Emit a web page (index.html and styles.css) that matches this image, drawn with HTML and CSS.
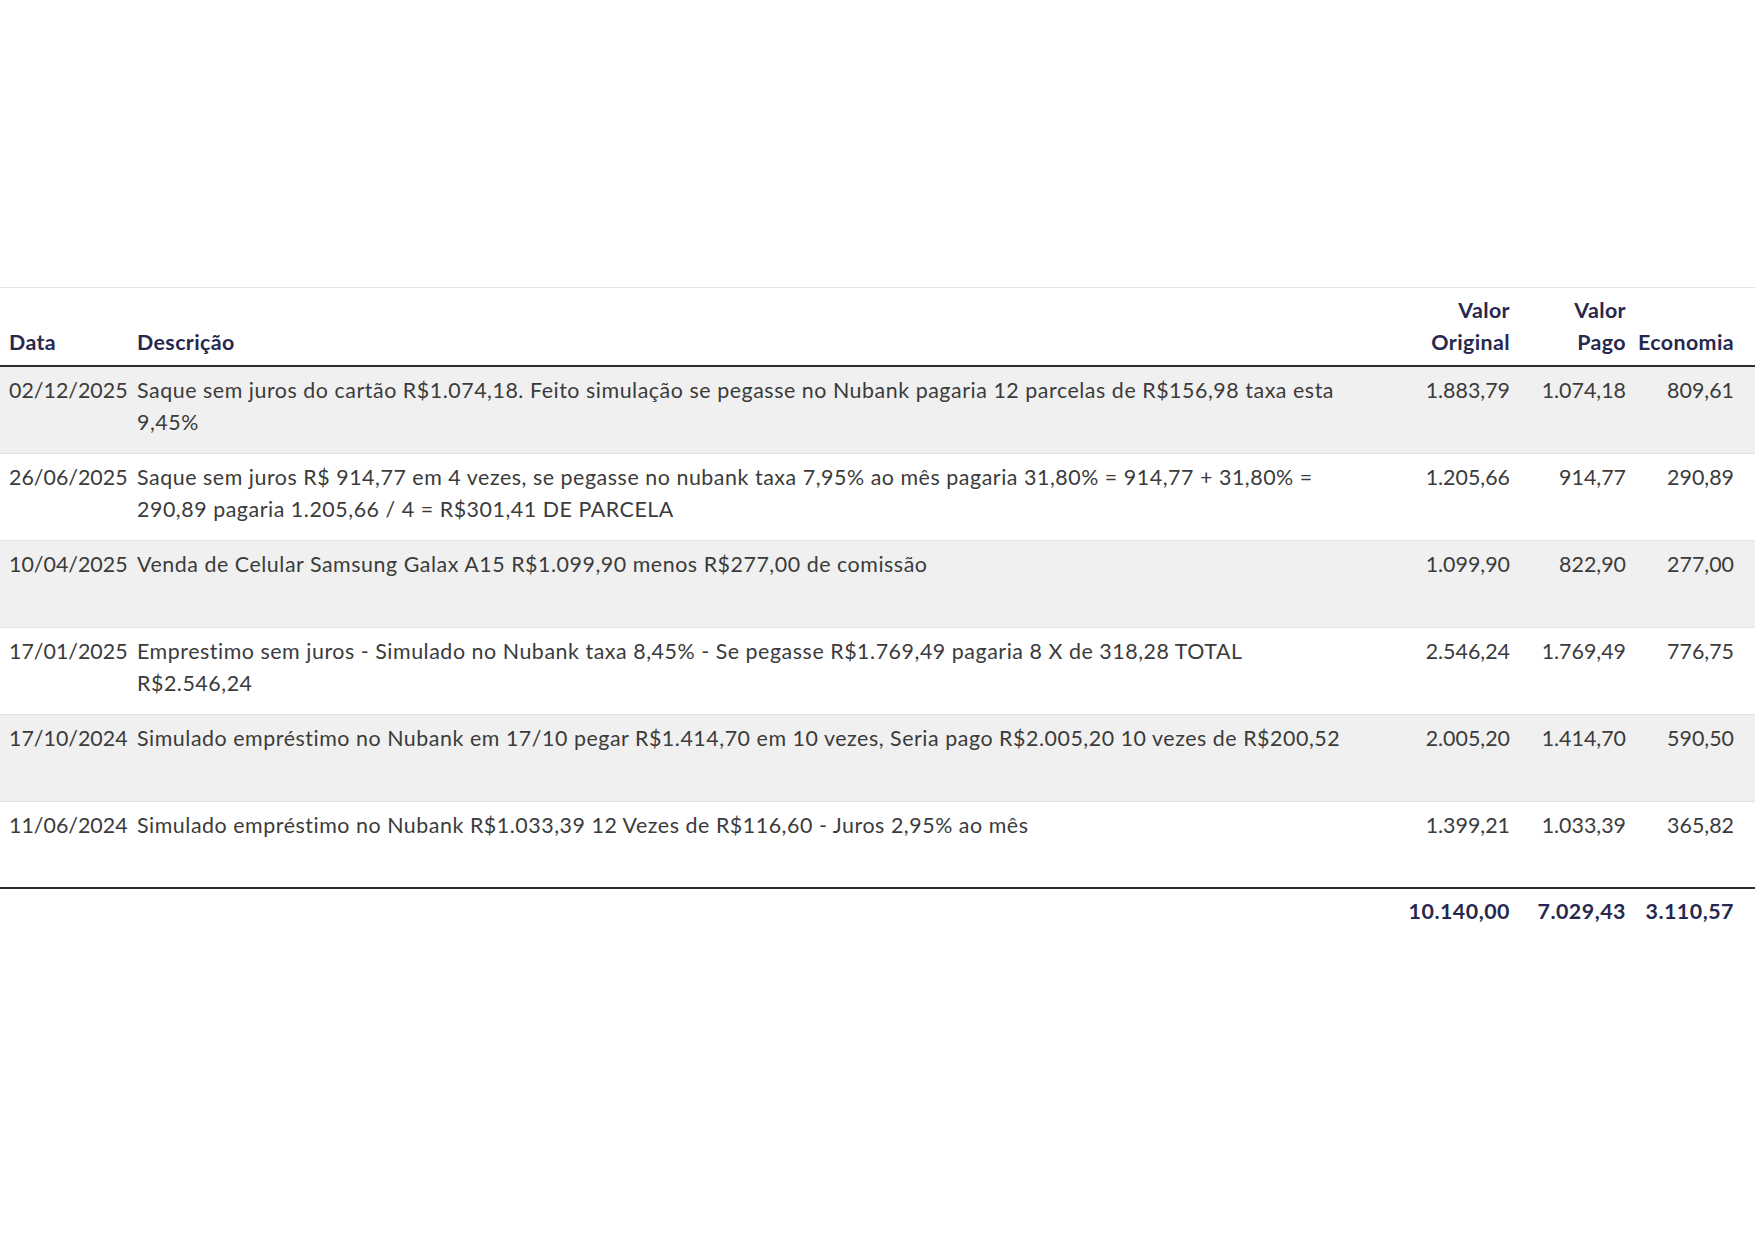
FILE: index.html
```html
<!DOCTYPE html>
<html lang="pt-BR">
<head>
<meta charset="utf-8">
<title>Economia</title>
<link rel="stylesheet" href="styles.css">
</head>
<body>
<main class="page">
  <table class="ledger">
    <colgroup>
      <col class="c-date">
      <col class="c-desc">
      <col class="c-orig">
      <col class="c-pago">
      <col class="c-eco">
    </colgroup>
    <thead>
      <tr>
        <th class="date">Data</th>
        <th class="desc">Descrição</th>
        <th class="num orig">Valor Original</th>
        <th class="num pago">Valor Pago</th>
        <th class="num last">Economia</th>
      </tr>
    </thead>
    <tbody>
      <tr class="odd">
        <td class="date">02/12/2025</td>
        <td class="desc">Saque sem juros do cartão R$1.074,18. Feito simulação se pegasse no Nubank pagaria 12 parcelas de R$156,98 taxa esta 9,45%</td>
        <td class="num orig">1.883,79</td>
        <td class="num pago">1.074,18</td>
        <td class="num last">809,61</td>
      </tr>
      <tr>
        <td class="date">26/06/2025</td>
        <td class="desc">Saque sem juros R$ 914,77 em 4 vezes, se pegasse no nubank taxa 7,95% ao mês pagaria 31,80% = 914,77 + 31,80% = 290,89 pagaria 1.205,66 / 4 = R$301,41 DE PARCELA</td>
        <td class="num orig">1.205,66</td>
        <td class="num pago">914,77</td>
        <td class="num last">290,89</td>
      </tr>
      <tr class="odd">
        <td class="date">10/04/2025</td>
        <td class="desc">Venda de Celular Samsung Galax A15 R$1.099,90 menos R$277,00 de comissão</td>
        <td class="num orig">1.099,90</td>
        <td class="num pago">822,90</td>
        <td class="num last">277,00</td>
      </tr>
      <tr>
        <td class="date">17/01/2025</td>
        <td class="desc">Emprestimo sem juros - Simulado no Nubank taxa 8,45% - Se pegasse R$1.769,49 pagaria 8 X de 318,28 TOTAL R$2.546,24</td>
        <td class="num orig">2.546,24</td>
        <td class="num pago">1.769,49</td>
        <td class="num last">776,75</td>
      </tr>
      <tr class="odd">
        <td class="date">17/10/2024</td>
        <td class="desc">Simulado empréstimo no Nubank em 17/10 pegar R$1.414,70 em 10 vezes, Seria pago R$2.005,20 10 vezes de R$200,52</td>
        <td class="num orig">2.005,20</td>
        <td class="num pago">1.414,70</td>
        <td class="num last">590,50</td>
      </tr>
      <tr>
        <td class="date">11/06/2024</td>
        <td class="desc">Simulado empréstimo no Nubank R$1.033,39 12 Vezes de R$116,60 - Juros 2,95% ao mês</td>
        <td class="num orig">1.399,21</td>
        <td class="num pago">1.033,39</td>
        <td class="num last">365,82</td>
      </tr>
    </tbody>
    <tfoot>
      <tr>
        <td class="date"></td>
        <td class="desc"></td>
        <td class="num orig">10.140,00</td>
        <td class="num pago">7.029,43</td>
        <td class="num last">3.110,57</td>
      </tr>
    </tfoot>
  </table>
</main>
</body>
</html>
```

FILE: styles.css
```css
html, body {
  margin: 0;
  padding: 0;
  background: #ffffff;
}

body {
  font-family: "Lato", "Noto Sans", sans-serif;
  font-size: 21.4px;
  color: #3b3b3b;
}

.page {
  padding-top: 287px;
}

.ledger {
  width: 1755px;
  border-collapse: collapse;
  table-layout: fixed;
  border-top: 1px solid #e4e4e4;
}

.c-date { width: 132px; }
.c-desc { width: 1223px; }
.c-orig { width: 160px; }
.c-pago { width: 116px; }
.c-eco  { width: 124px; }

.ledger th,
.ledger td {
  padding: 0 5px;
  line-height: 32px;
}

.ledger .date { padding-left: 9px; }
.ledger .num { text-align: right; }
.ledger .orig { padding-left: 35px; }
.ledger .pago { padding-left: 22px; }
.ledger .last { padding-right: 21px; padding-left: 6px; }

.ledger thead th {
  color: #28284f;
  font-weight: 700;
  text-align: left;
  vertical-align: bottom;
  padding-top: 6px;
  padding-bottom: 7px;
  border-bottom: 2px solid #2e2e2e;
  letter-spacing: 0.4px;
}

.ledger thead th.num { text-align: right; }

.ledger tbody td {
  vertical-align: top;
  height: 87px;
  box-sizing: border-box;
  padding-top: 7px;
  padding-bottom: 0;
  border-bottom: 1px solid #e2e2e2;
}

.ledger tbody td.desc { letter-spacing: 0.54px; }

.ledger tbody tr.odd td { background: #f0f0f0; }

.ledger tbody tr:last-child td { border-bottom: 2px solid #2e2e2e; }

.ledger tfoot td {
  color: #28284f;
  font-weight: 700;
  padding-top: 6px;
  padding-bottom: 6px;
  letter-spacing: 0.5px;
}
```
